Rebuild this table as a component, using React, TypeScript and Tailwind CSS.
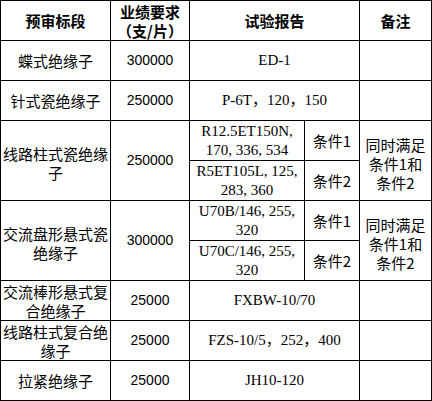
import React from "react";

const cell = "bg-white flex items-center justify-center text-center text-black";
const cjk = "font-['Noto_Sans_CJK_SC',sans-serif] text-[15px] leading-[19px]";
const num = "font-['Liberation_Sans',sans-serif] text-[14px]";
const lat = "font-['Liberation_Serif','Noto_Sans_CJK_SC',serif] text-[15px] leading-[19px]";
const head = "font-['Noto_Sans_CJK_SC',sans-serif] text-[15px] font-bold leading-[19px]";

function Lines({ lines }: { lines: string[] }) {
  return (
    <div>
      {lines.map((l, i) => (
        <div key={i} className="whitespace-nowrap">
          {l}
        </div>
      ))}
    </div>
  );
}

export default function App() {
  return (
    <div className="w-[432px] h-[401px] bg-black p-px grid gap-px grid-cols-[109px_78px_114px_54px_71px] grid-rows-[repeat(10,39px)]">
      {/* header */}
      <div className={`${cell} ${head}`}>预审标段</div>
      <div className={`${cell} ${head}`}>
        <Lines lines={["业绩要求", "（支/片）"]} />
      </div>
      <div className={`${cell} ${head} col-span-2`}>试验报告</div>
      <div className={`${cell} ${head}`}>备注</div>

      {/* row 2 */}
      <div className={`${cell} ${cjk}`}>蝶式绝缘子</div>
      <div className={`${cell} ${num}`}>300000</div>
      <div className={`${cell} ${lat} col-span-2`}>ED-1</div>
      <div className={cell}></div>

      {/* row 3 */}
      <div className={`${cell} ${cjk}`}>针式瓷绝缘子</div>
      <div className={`${cell} ${num}`}>250000</div>
      <div className={`${cell} ${lat} col-span-2`}>P-6T，120，150</div>
      <div className={cell}></div>

      {/* row 4 */}
      <div className={`${cell} ${cjk} row-span-2 pt-[4px]`}>
        <Lines lines={["线路柱式瓷绝缘", "子"]} />
      </div>
      <div className={`${cell} ${num} row-span-2`}>250000</div>
      <div className={`${cell} ${lat}`}>
        <Lines lines={["R12.5ET150N,", "170, 336, 534"]} />
      </div>
      <div className={`${cell} ${cjk}`}>条件1</div>
      <div className={`${cell} ${cjk} row-span-2 pt-[6px]`}>
        <Lines lines={["同时满足", "条件1和", "条件2"]} />
      </div>
      <div className={`${cell} ${lat}`}>
        <Lines lines={["R5ET105L, 125,", "283, 360"]} />
      </div>
      <div className={`${cell} ${cjk}`}>条件2</div>

      {/* row 5 */}
      <div className={`${cell} ${cjk} row-span-2 pt-[4px]`}>
        <Lines lines={["交流盘形悬式瓷", "绝缘子"]} />
      </div>
      <div className={`${cell} ${num} row-span-2`}>300000</div>
      <div className={`${cell} ${lat}`}>
        <Lines lines={["U70B/146, 255,", "320"]} />
      </div>
      <div className={`${cell} ${cjk}`}>条件1</div>
      <div className={`${cell} ${cjk} row-span-2 pt-[6px]`}>
        <Lines lines={["同时满足", "条件1和", "条件2"]} />
      </div>
      <div className={`${cell} ${lat}`}>
        <Lines lines={["U70C/146, 255,", "320"]} />
      </div>
      <div className={`${cell} ${cjk}`}>条件2</div>

      {/* row 8 */}
      <div className={`${cell} ${cjk}`}>
        <Lines lines={["交流棒形悬式复", "合绝缘子"]} />
      </div>
      <div className={`${cell} ${num}`}>25000</div>
      <div className={`${cell} ${lat} col-span-2`}>FXBW-10/70</div>
      <div className={cell}></div>

      {/* row 9 */}
      <div className={`${cell} ${cjk}`}>
        <Lines lines={["线路柱式复合绝", "缘子"]} />
      </div>
      <div className={`${cell} ${num}`}>25000</div>
      <div className={`${cell} ${lat} col-span-2`}>FZS-10/5，252，400</div>
      <div className={cell}></div>

      {/* row 10 */}
      <div className={`${cell} ${cjk}`}>拉紧绝缘子</div>
      <div className={`${cell} ${num}`}>25000</div>
      <div className={`${cell} ${lat} col-span-2`}>JH10-120</div>
      <div className={cell}></div>
    </div>
  );
}
